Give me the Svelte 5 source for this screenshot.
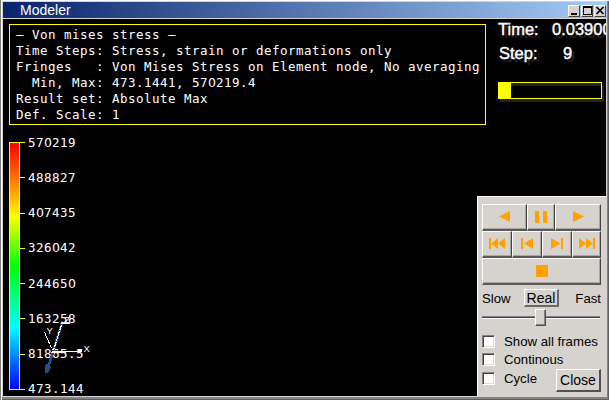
<script>
  const info = [
    '– Von mises stress –',
    'Time Steps: Stress, strain or deformations only',
    'Fringes   : Von Mises Stress on Element node, No averaging',
    '  Min, Max: 473.1441, 570219.4',
    'Result set: Absolute Max',
    'Def. Scale: 1'
  ];
  const scale = ['570219', '488827', '407435', '326042', '244650', '163258', '81865.5', '473.144'];
  const options = $state([
    { label: 'Show all frames', on: false },
    { label: 'Continous', on: false },
    { label: 'Cycle', on: false }
  ]);
  const parts = (text) => text.split(/(0)/);
</script>

{#snippet mono(text)}{#each parts(text) as p}{#if p === '0'}<span class="zero">0</span>{:else}{p}{/if}{/each}{/snippet}

<div class="window">
  <header class="titlebar">
    <span class="title">Modeler</span>
    <div class="winbtns">
      <button aria-label="Minimize"><svg width="11" height="11"><path d="M2 7h6v2H2z" /></svg></button>
      <button aria-label="Maximize"><svg width="11" height="11"><path fill-rule="evenodd" d="M1 0h9v9H1zM2 2v6h7V2z" /></svg></button>
      <button aria-label="Close window"><svg width="11" height="11"><path d="M1.5 1l7 7M8.5 1l-7 7" fill="none" stroke="#000" stroke-width="1.7" /></svg></button>
    </div>
  </header>

  <main class="viewport">
    <section class="left">
      <div class="info">
        {#each info as line}<div>{@render mono(line)}</div>{/each}
      </div>
      <div class="legend">
        <div class="bar"></div>
        <div class="ticks">
          {#each scale as value}
            <div class="tick"><i></i><span>{@render mono(value)}</span></div>
          {/each}
        </div>
      </div>
    </section>

    <aside class="right">
      <div class="readout"><span>Time:</span><span>0.03900</span></div>
      <div class="readout step"><span>Step:</span><span>9</span></div>
      <div class="progress"><div></div></div>

      <div class="panel">
        <div class="row three">
          <button aria-label="Play backward"><svg width="12" height="12"><path d="M11 0v11L0 5.5z" /></svg></button>
          <button aria-label="Pause"><svg width="12" height="12"><path d="M0 0h4v12H0zM8 0h4v12H8z" /></svg></button>
          <button aria-label="Play"><svg width="12" height="12"><path d="M1 0v11L12 5.5z" /></svg></button>
        </div>
        <div class="row four">
          <button aria-label="First"><svg width="16" height="12"><path d="M0 0h2v11H0zM9 0v11L2 5.5zM16 0v11L9 5.5z" /></svg></button>
          <button aria-label="Step back"><svg width="12" height="12"><path d="M0 0h2v11H0zM12 0v11L3 5.5z" /></svg></button>
          <button aria-label="Step forward"><svg width="12" height="12"><path d="M10 0h2v11h-2zM0 0v11L9.500 5.500z" /></svg></button>
          <button aria-label="Last"><svg width="16" height="12"><path d="M14 0h2v11h-2zM0 0v11L7 5.500zM7 0v11L14 5.500z" /></svg></button>
        </div>
        <div class="row one">
          <button aria-label="Stop"><svg width="12" height="12"><path d="M0 0h12v12H0z" /></svg></button>
        </div>
        <div class="speed"><span>Slow</span><button>Real</button><span>Fast</span></div>
        <div class="slider"><div class="track"></div><div class="thumb"></div></div>
        <div class="bottom">
          <div class="checks">
            {#each options as o}
              <label><input type="checkbox" bind:checked={o.on} />{o.label}</label>
            {/each}
          </div>
          <button class="close">Close</button>
        </div>
      </div>
    </aside>

    <svg class="triad" width="60" height="70" viewBox="36 312 60 70">
      <path d="M62 323L48 368" stroke="#20508a" stroke-width="2.6" />
      <path d="M47 364l4 3.500l-3 5h-3v-7z" fill="#20508a" />
      <path d="M61.500 325L53.500 350" stroke="#fff" stroke-width="1.200" stroke-dasharray="5 1" />
      <path d="M44.500 332l8 18.500" stroke="#fff" stroke-dasharray="4 .6" />
      <path d="M52 351.500h30M51 352.500h15M78 350.500h4" stroke="#fff" />
      <path d="M61 323.500h9" stroke="#fff" />
      <text x="46.500" y="334">Y</text>
      <text x="83.500" y="352">X</text>
      <text x="64.500" y="323">Z</text>
    </svg>
  </main>
</div>

<style>
  :global(body) { background: #000; overflow: hidden; }
  * { box-sizing: border-box; }
  .window {
    width: 609px;
    height: 400px;
    padding: 2px 2px 4px 3px;
    background: #d6d3ce;
    box-shadow: inset 1px 0 #808080, inset 2px 1px #fff, inset -1px -1px #606060, inset -2px -3px #848284;
    font-family: "Liberation Sans", Arial, sans-serif;
    display: flex;
    flex-direction: column;
  }
  .titlebar {
    height: 16px;
    flex: none;
    display: flex;
    justify-content: space-between;
    align-items: center;
    padding: 0 1px 0 17px;
    background: linear-gradient(90deg, #08246b, #a5cbf7);
    color: #fff;
    font-size: 14px;
    line-height: 16px;
  }
  button {
    font: inherit;
    padding: 0;
    margin: 0;
    color: #000;
    background: #d6d3ce;
    border: 2px solid;
    border-color: #fff #6b6965 #6b6965 #fff;
    border-radius: 0;
    display: flex;
    align-items: center;
    justify-content: center;
  }
  .winbtns { display: flex; margin-top: 1px; }
  .winbtns button { width: 12px; height: 12px; border-width: 1px; border-color: #fff #404040 #404040 #fff; margin-left: 1px; }
  .winbtns svg { display: block; flex: none; margin-top: 1px; }
  .viewport {
    position: relative;
    margin-top: 1px;
    width: 603px;
    height: 377px;
    background: #000;
    display: flex;
    overflow: hidden;
  }
  .left { width: 474px; flex: none; padding: 5px 0 0 6px; }
  .info {
    width: 477px;
    height: 101px;
    border: 1px solid #ff0;
    margin-right: -10px;
    padding: 2px 0 0 6px;
    white-space: pre;
    line-height: 16px;
  }
  .info div { height: 16px; }
  .info, .ticks {
    color: #fff;
    font-family: "DejaVu Sans Mono", monospace;
    font-size: 12.5px;
    letter-spacing: 0.474px;
  }
  .zero { font-family: "DejaVu Sans", sans-serif; letter-spacing: 0.047px; }
  .legend { display: flex; margin-top: 17px; }
  .bar {
    width: 11px;
    height: 248px;
    border: 1px solid #ff0;
    background: linear-gradient(#f00 0%, #ff8000 16%, #ff0 30%, #0f0 50%, #0ff 75%, #0080ff 87%, #00f 100%);
  }
  .ticks { height: 248px; display: flex; flex-direction: column; justify-content: space-between; }
  .tick { height: 1px; display: flex; align-items: center; }
  .tick i { width: 5px; height: 1px; background: #ff0; margin-right: 3px; }
  .tick > span { line-height: 16px; white-space: nowrap; }
  .right { width: 129px; flex: none; display: flex; flex-direction: column; }
  .readout {
    height: 24px;
    padding-left: 21px;
    display: flex;
    line-height: 20px;
    color: #fff;
    font-size: 16.500px;
    -webkit-text-stroke: 0.4px #fff;
    text-shadow: 3px 3px #242424;
    white-space: nowrap;
  }
  .readout span { flex: none; }
  .readout span:first-child { width: 54px; }
  .readout.step span:first-child { width: 64px; }
  .step { padding-left: 22px; }
  .progress {
    width: 104px;
    height: 17px;
    margin: 15px 0 0 21px;
    border: 1px solid #ff0;
    box-shadow: 2px 3px #202020, inset 2px 3px #202020;
    background: #000;
    flex: none;
  }
  .progress div { width: 12px; height: 15px; background: #ff0; }
  .panel {
    margin-top: auto;
    height: 200px;
    flex: none;
    background: #d6d3ce;
    border-left: 1px solid #fff;
    border-top: 1px solid #fff;
    padding: 7px 6px 0 4px;
    font-size: 13.2px;
    color: #000;
  }
  .row { display: grid; height: 27px; width: 119px; }
  .row button { box-shadow: inset -1px -1px #aaa7a0; border-width: 1px 1px 2px 1px; border-color: #fff #424242 #5a5955 #fff; }
  .three { grid-template-columns: 45px 28px 46px; }
  .four { grid-template-columns: 30px 30px 30px 29px; }
  .row svg { fill: #ffa200; display: block; }
  .speed { width: 119px; height: 18px; margin-top: 4px; display: flex; align-items: center; justify-content: space-between; }
  .speed button { width: 35px; height: 18px; border-width: 1px 2px 2px 1px; margin-right: 3px; font-size: 14px; }
  .slider { width: 118px; height: 16px; margin-top: 2px; display: flex; align-items: center; }
  .track { width: 118px; height: 3px; flex: none; border-top: 1px solid #848284; border-bottom: 1px solid #fff; background: #404040; }
  .thumb { width: 11px; height: 17px; flex: none; margin-left: -65px; background: #d6d3ce; border: 1px solid; border-color: #fff #525252 #525252 #fff; box-shadow: inset -1px -1px #848284; position: relative; }
  .bottom { display: flex; justify-content: space-between; width: 119px; height: 67px; }
  .checks { width: 74px; padding-top: 7px; flex: none; }
  label { display: flex; align-items: center; height: 18.500px; white-space: nowrap; }
  input {
    appearance: none;
    width: 13px;
    height: 13px;
    margin: 0 9px 0 0;
    flex: none;
    background: #fff;
    border: 1px solid;
    border-color: #848284 #fff #fff #848284;
    box-shadow: inset 1px 1px #424242, inset -1px -1px #dedbd6;
  }
  .close { width: 45px; height: 23px; margin-top: 44px; border-width: 1px 2px 2px 1px; border-color: #fff #525252 #525252 #fff; flex: none; font-size: 14px; }
  .triad { position: absolute; left: 33px; top: 293px; }
  .triad path { shape-rendering: crispEdges; }
  .triad text { font: 9.5px "Liberation Sans", sans-serif; fill: #fff; }
</style>
